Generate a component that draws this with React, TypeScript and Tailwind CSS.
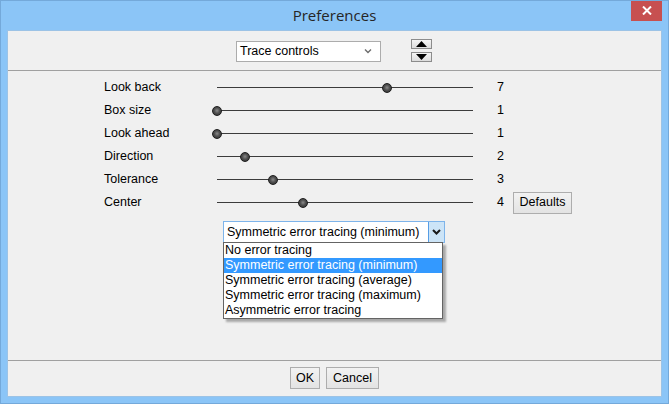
import { useState } from "react";

const sliders = [
  { label: "Look back", value: 7, x: 170 },
  { label: "Box size", value: 1, x: 0 },
  { label: "Look ahead", value: 1, x: 0 },
  { label: "Direction", value: 2, x: 28 },
  { label: "Tolerance", value: 3, x: 56 },
  { label: "Center", value: 4, x: 86 },
];

const modes = [
  "No error tracing",
  "Symmetric error tracing (minimum)",
  "Symmetric error tracing (average)",
  "Symmetric error tracing (maximum)",
  "Asymmetric error tracing",
];

const Slider = ({ x }: { x: number }) => {
  return (
    <div className="relative w-[256px] h-[12px] flex items-center">
      <div className="w-full h-px bg-[#3c3c3c]" />
      <div
        style={{ left: x - 5 }}
        className="absolute top-[1px] w-[10px] h-[10px] rounded-full border border-[#1e1e1e] bg-[radial-gradient(circle_at_50%_45%,#8a8a8a_0%,#505050_45%,#2a2a2a_100%)]"
      />
    </div>
  );
};

const Btn = ({ label, w }: { label: string; w: string }) => {
  return (
    <button
      className={`${w} h-[22px] border border-[#adadad] bg-[linear-gradient(#f2f2f2,#e3e3e3)] text-[12.5px] text-black leading-none`}
    >
      {label}
    </button>
  );
};

export default function App() {
  const [selected] = useState(1);

  return (
    <div
      className="w-[669px] h-[404px] flex flex-col bg-[#8bc5f7] border border-[#74a9da] overflow-hidden"
      style={{ fontFamily: '"Liberation Sans", Arial, sans-serif' }}
    >
      {/* title bar */}
      <div className="relative h-[29px] flex items-center justify-center">
        <span
          className="text-[15px] text-[#262626] -mt-[1px]"
          style={{ fontFamily: '"Open Sans", "Noto Sans", sans-serif' }}
        >
          Preferences
        </span>
        <div className="absolute -top-px right-[6px] w-[31px] h-[21px] bg-[#c75050] flex items-center justify-center">
          <svg width="10" height="9" viewBox="0 0 10 9">
            <path d="M1 0.5 L9 8.5 M9 0.5 L1 8.5" stroke="white" strokeWidth="2" />
          </svg>
        </div>
      </div>

      {/* body */}
      <div className="mx-[6px] h-[367px] bg-[#f0f0f0] flex flex-col border border-[#9cc3e6] text-[12.5px] text-black">
        <div className="h-[40px] flex items-center pl-[228px] border-b border-[#a0a0a0]">
          <div className="w-[145px] h-[21px] bg-white border border-[#acacac] flex items-center justify-between pl-[3px] pr-[8px] mt-[1px]">
            <span>Trace controls</span>
            <svg width="8" height="6" viewBox="0 0 8 6">
              <path d="M1 1.5 L4 4.5 L7 1.5" stroke="#6d6d6d" strokeWidth="1.4" fill="none" />
            </svg>
          </div>
          <div className="ml-[30px] flex flex-col gap-[3px]">
            <div className="w-[21px] h-[10px] border border-[#8c8c8c] bg-[linear-gradient(#f4f4f4,#dcdcdc)] flex items-center justify-center">
              <svg width="11" height="6" viewBox="0 0 11 6">
                <path d="M5.5 0 L11 6 L0 6 Z" fill="black" />
              </svg>
            </div>
            <div className="w-[21px] h-[10px] border border-[#8c8c8c] bg-[linear-gradient(#f4f4f4,#dcdcdc)] flex items-center justify-center">
              <svg width="11" height="6" viewBox="0 0 11 6">
                <path d="M0 0 L11 0 L5.5 6 Z" fill="black" />
              </svg>
            </div>
          </div>
        </div>

        <div className="flex-1 flex flex-col pt-[5px] pl-[96px] border-b border-[#a0a0a0]">
          {sliders.map((s) => (
            <div key={s.label} className="h-[23px] flex items-center">
              <span className="w-[113px]">{s.label}</span>
              <Slider x={s.x} />
              <span className="ml-[24px] w-[16px]">{s.value}</span>
              {s.label === "Center" && <Btn label="Defaults" w="w-[59px]" />}
            </div>
          ))}

          <div className="relative mt-[7px] ml-[119px] w-[222px]">
            <div className="h-[22px] flex bg-white border border-[#7eb4ea]">
              <span className="flex-1 flex items-center pl-[3px] whitespace-nowrap">
                {modes[selected]}
              </span>
              <div className="w-[16px] bg-[#cce4f7] border-l border-[#569de5] flex items-center justify-center">
                <svg width="9" height="6" viewBox="0 0 9 6">
                  <path d="M1 1 L4.5 4.5 L8 1" stroke="#1a1a1a" strokeWidth="2" fill="none" />
                </svg>
              </div>
            </div>
            <div className="absolute left-0 top-[21px] w-[220px] bg-white border border-[#646464] shadow-[3px_3px_2px_rgba(0,0,0,0.3)]">
              {modes.map((m, i) => (
                <div
                  key={m}
                  className={`h-[15px] flex items-center pl-px whitespace-nowrap ${
                    i === selected ? "bg-[#3399ff] text-white" : ""
                  }`}
                >
                  {m}
                </div>
              ))}
            </div>
          </div>
        </div>

        <div className="h-[35px] flex items-start justify-center gap-[6px] pt-[6px]">
          <Btn label="OK" w="w-[30px]" />
          <Btn label="Cancel" w="w-[53px]" />
        </div>
      </div>
    </div>
  );
}
